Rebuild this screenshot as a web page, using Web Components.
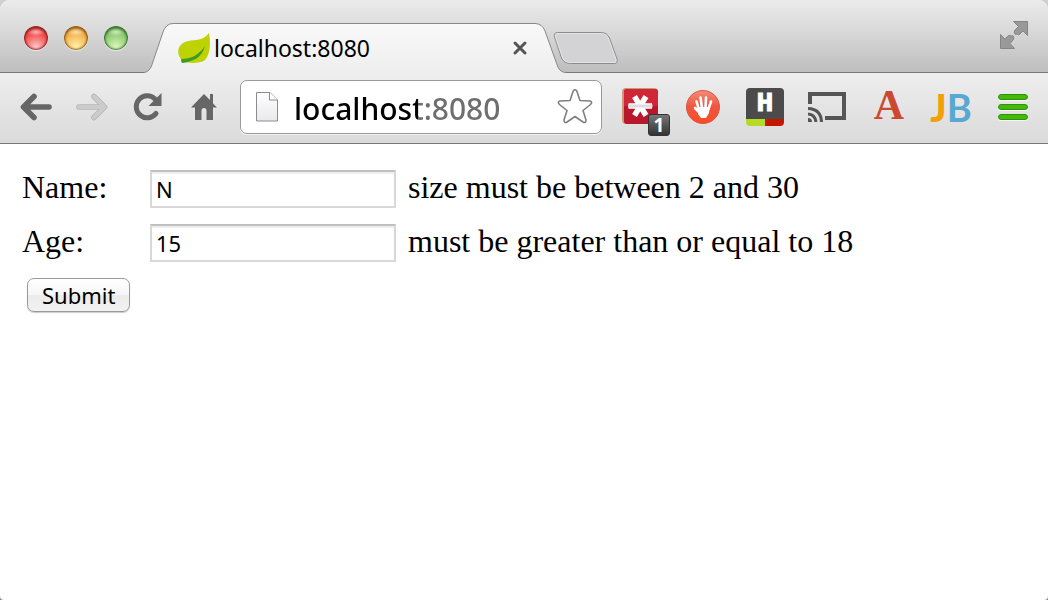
<!DOCTYPE html>
<html lang="en">
<head>
<meta charset="utf-8">
<meta name="viewport" content="width=device-width, initial-scale=1">
<title>localhost:8080</title>
<style>
  html { background: linear-gradient(#d0d0d0 50%, #888 50%); }
  body { margin: 0; font-family: "Noto Sans", sans-serif; color: #000; }
</style>
</head>
<body>
<browser-window>
  <tab-strip slot="strip">
    <browser-tab>localhost:8080</browser-tab>
  </tab-strip>
  <browser-toolbar slot="toolbar"></browser-toolbar>
  <person-form></person-form>
</browser-window>

<script>
function define(name, html, setup) {
  const template = document.createElement('template');
  template.innerHTML = html;
  customElements.define(name, class extends HTMLElement {
    constructor() {
      super();
      this.attachShadow({ mode: 'open' }).append(template.content.cloneNode(true));
    }
    connectedCallback() {
      if (setup) setup(this, this.shadowRoot);
    }
  });
}

define('browser-window', `
<style>
  :host { display: flex; flex-direction: column; min-height: 100vh; background: #fff; border-radius: 10px 10px 4px 4px; overflow: hidden; }
  main { flex: 1; }
</style>
<slot name="strip"></slot>
<slot name="toolbar"></slot>
<main><slot></slot></main>`);

define('traffic-lights', `
<style>
  :host { display: flex; gap: 16px; }
  button { width: 24px; height: 24px; padding: 0; border: 0; border-radius: 50%; box-shadow: 0 1px 1px #fff9, inset 0 0 2px 1px var(--rim), inset 0 2px 3px var(--rim); }
  .close { --rim: #8c2424; background: radial-gradient(ellipse 9px 4px at 12px 6px, #fff9, #fff0), radial-gradient(circle at 12px 21px, #ffc9c9, #f2504f 55%, #df3534); }
  .min { --rim: #8f5a1c; background: radial-gradient(ellipse 9px 4px at 12px 6px, #fff9, #fff0), radial-gradient(circle at 12px 21px, #fff3a8, #f3b04a 60%, #e69528); }
  .zoom { --rim: #397032; background: radial-gradient(ellipse 9px 4px at 12px 6px, #fff9, #fff0), radial-gradient(circle at 12px 21px, #dcf7bc, #89c86c 60%, #68b04e); }
</style>
<button class="close" aria-label="Close window"></button>
<button class="min" aria-label="Minimize window"></button>
<button class="zoom" aria-label="Zoom window"></button>`);

define('tab-strip', `
<style>
  :host { display: flex; align-items: flex-end; height: 73px; box-sizing: border-box; padding-left: 24px; background: linear-gradient(#777, #777) bottom / 100% 1px no-repeat, linear-gradient(#ebebeb, #dadada 40%, #bdbdbd); }
  traffic-lights { margin: 0 16px 23px 0; }
  ::slotted(browser-tab) { flex: 0 1 422px; min-width: 0; }
  button { padding: 0; border: 0; background: none; line-height: 0; }
  .new { margin: 0 auto 8px -13px; }
  .full { margin: 0 20px 24px 0; }
</style>
<traffic-lights></traffic-lights>
<slot></slot>
<button class="new" aria-label="New tab"><svg width="66" height="34" viewBox="0 0 66 34">
  <path d="M4.500 1.500H48Q54 1.500 56.500 7L64 28Q65 32.500 61.500 32.500H17.500Q11 32.500 8.500 27L1.500 6Q.5 1.500 4.500 1.500Z" fill="#d3d3d5" stroke="#8c8c8c"/>
  <path d="M5 2.500H48Q53 2.500 55.500 7.500L63 28Q64 31.500 61.500 31.500H17.500Q12 31.500 9.500 26.500L2.500 6Q1.500 2.500 5 2.500Z" fill="none" stroke="#fff" stroke-opacity=".4"/>
</svg></button>
<button class="full" aria-label="Enter full screen"><svg width="28" height="28" viewBox="0 0 28 28" fill="#999" stroke="#858585">
  <path d="M13.500.5H27.500V14.500L23 10 20 13Q18.500 14.500 17 13Q13.500 14.500 14.500 9.500L18.500 5.500Z"/>
  <path d="M.5 13.500 5 18 8 15Q9.500 13.500 11 15Q14.500 13.500 13.500 18.500L10 22.500 14.500 27.500H.5Z"/>
</svg></button>`);

define('browser-tab', `
<style>
  :host { display: flex; height: 50px; }
  svg { flex: none; display: block; }
  .body { flex: 1; min-width: 0; display: flex; align-items: center; background: linear-gradient(#f9f9f9, #eee); border-top: 1px solid #888; box-sizing: border-box; padding: 0 6px 2px 3px; }
  .title { flex: 1; min-width: 0; overflow: hidden; white-space: nowrap; font-size: 23px; line-height: 32px; padding-left: 3px; }
  button { padding: 0; border: 0; background: none; line-height: 0; }
</style>
<svg width="30" height="50" viewBox="0 0 30 50">
  <defs><linearGradient id="g" x2="0" y2="1"><stop stop-color="#f9f9f9"/><stop offset="1" stop-color="#eee"/></linearGradient></defs>
  <path d="M0 49.500Q5 49 7.500 43L19 9Q22 .5 29 .5H30V50H0Z" fill="url(#g)"/>
  <path d="M0 49.500Q5 49 7.500 43L19 9Q22 .5 29 .5H30" fill="none" stroke="#888"/>
</svg>
<div class="body">
  <svg width="34" height="32" viewBox="0 0 34 32">
    <path d="M32 1C34 11 33 23 28 28C23 32 11 31 7 30Q4 33 4 27C-1 21 1 13 8 10C16 7 26 10 32 1Z" fill="#bfd203"/>
    <path d="M4 27C14 27 22 23 28 14C25 26 15 30 5 31Z" fill="#3e9b25"/>
  </svg>
  <span class="title"><slot></slot></span>
  <button aria-label="Close tab"><svg width="16" height="16" viewBox="0 0 16 16"><path d="M3 3 13 13M13 3 3 13" stroke="#555" stroke-width="3" stroke-linecap="round"/></svg></button>
</div>
<svg width="32" height="50" viewBox="0 0 32 50">
  <defs><linearGradient id="h" x2="0" y2="1"><stop stop-color="#f9f9f9"/><stop offset="1" stop-color="#eee"/></linearGradient></defs>
  <path d="M0 .5H1Q8 .5 11 8L23.500 43Q26 49.500 32 49.500V50H0Z" fill="url(#h)"/>
  <path d="M0 .5H1Q8 .5 11 8L23.500 43Q26 49.500 32 49.500" fill="none" stroke="#888"/>
</svg>`);

define('omni-box', `
<style>
  :host { display: flex; align-items: center; height: 54px; box-sizing: border-box; padding: 0 8px 0 14px; background: #fff; border: 1px solid #999; border-radius: 7px; box-shadow: 0 1px 0 #fffa; }
  svg { flex: none; display: block; }
  input { flex: 1; min-width: 0; margin: 0 0 0 14px; padding: 2px 0 0; border: 0; outline: 0; box-sizing: border-box; font: 500 30px/42px "Noto Sans", sans-serif; height: 44px;
    color: transparent; background: linear-gradient(90deg, #000 124px, #6e6e6e 124px); -webkit-background-clip: text; background-clip: text; caret-color: #000; }
  button { padding: 0; border: 0; background: none; }
</style>
<svg width="25" height="32" viewBox="0 0 25 32">
  <defs><linearGradient id="p" x2="0" y2="1"><stop stop-color="#fff"/><stop offset="1" stop-color="#e9e9ec"/></linearGradient></defs>
  <path d="M1.500 1.500H15L22.500 9V30H1.500Z" fill="url(#p)" stroke="#8c8c8c"/>
  <path d="M14.500 1.500V9H22.500" fill="#fff" stroke="#8c8c8c"/>
</svg>
<input type="text" aria-label="Address" value="localhost:8080" spellcheck="false">
<button aria-label="Bookmark this page"><svg width="36" height="36" viewBox="0 0 36 36">
  <path d="M16.200 2Q18 -.5 19.800 2L23 11.500 33 12Q36 13 33.500 15.500L26 21.500 29 31Q29 34.500 26 33L18 27.500 10 33Q7 34.500 7 31L10 21.500 2.500 15.500Q0 13 3 12L13 11.500Z" fill="#fff" stroke="#808080" stroke-width="1.600" stroke-linejoin="round"/>
</svg></button>`);

define('tool-button', `
<style>
  :host { display: block; width: 56px; }
  :host([wide]) { width: 62px; }
  button { display: grid; place-items: center; width: 100%; height: 54px; padding: 0; border: 0; background: none; }
</style>
<button><slot></slot></button>`, (host, root) => {
  root.querySelector('button').setAttribute('aria-label', host.getAttribute('label'));
});

define('count-badge', `
<style>
  :host { position: absolute; left: 26px; top: 26px; width: 22px; height: 22px; box-sizing: border-box; border: 1px solid #333; border-radius: 3px; background: linear-gradient(#777, #333); color: #fff; font: bold 19px/20px "Noto Sans", sans-serif; text-align: center; }
</style>
<slot></slot>`);

define('browser-toolbar', `
<style>
  :host { display: flex; gap: 8px; padding: 7px 4px 9px 8px; background: linear-gradient(#eee, #dadada); border-bottom: 1px solid #777; }
  nav, .extensions { display: flex; flex: none; }
  omni-box { flex: 1; min-width: 0; }
  svg { display: block; }
  .badged { position: relative; width: 38px; height: 38px; }
  .h-logo { width: 38px; height: 38px; border-radius: 4px; overflow: hidden; background: linear-gradient(90deg, #b5dc22 19px, #c51700 19px) bottom / 100% 7px no-repeat, #4b4b4b; color: #fff; font: bold 28px/32px "Liberation Mono", monospace; -webkit-text-stroke: 1px #fff; }
  .a-logo { color: #cc4931; font: bold 42px/38px "Liberation Serif", serif; margin-bottom: 4px; }
  .jb-logo { color: #58a8d2; font: bold 38px/38px "Lato", sans-serif; }
  .jb-logo b { color: #f2a007; }
</style>
<nav aria-label="Navigation">
  <tool-button label="Back"><svg width="32" height="28" viewBox="0 0 32 28"><path d="M14 3.500 3.500 14 14 24.500M4 14H29" fill="none" stroke="#666" stroke-width="5.600" stroke-linecap="round" stroke-linejoin="round"/></svg></tool-button>
  <tool-button label="Forward"><svg width="32" height="28" viewBox="0 0 32 28"><path d="M18 3.500 28.500 14 18 24.500M28 14H3" fill="none" stroke="#b5b5b5" stroke-width="5.600" stroke-linecap="round" stroke-linejoin="round"/><path d="M18 3.500 28.500 14 18 24.500M28 14H3" fill="none" stroke="#cbcbcb" stroke-width="4" stroke-linecap="round" stroke-linejoin="round"/></svg></tool-button>
  <tool-button label="Reload"><svg width="30" height="28" viewBox="0 0 30 28"><path d="M23 20.500A11 11 0 1 1 22 6" fill="none" stroke="#666" stroke-width="5" stroke-linecap="round"/><path d="M28.500 0V13H15.500Z" fill="#666"/></svg></tool-button>
  <tool-button label="Home"><svg width="26" height="28" viewBox="0 0 26 28"><path d="M13 1 0 14.500H4V27H10.500V18Q10.500 15 13 15T15.500 18V27H22V14.500H26L22 10.500V1H19V7Z" fill="#666"/></svg></tool-button>
</nav>
<omni-box></omni-box>
<div class="extensions">
  <tool-button wide label="Password manager">
    <div class="badged"><svg width="36" height="37" viewBox="0 0 36 37">
      <rect width="36" height="36" rx="4" fill="#c99a77"/><rect x="2" y="1" width="34" height="35" rx="3" fill="#b9182c"/><path d="M2 18H36V5Q36 1 32 1H5Q2 1 2 4Z" fill="#cf2638"/>
      <path d="M6.500 18H30M12.500 8.500 24 27.500M24 8.500 12.500 27.500" stroke="#fff" stroke-width="5.500"/><path d="M6 18H30.500" stroke="#ddd" stroke-width="3"/>
    </svg><count-badge>1</count-badge></div>
  </tool-button>
  <tool-button wide label="Ad blocker"><svg width="34" height="34" viewBox="0 0 34 34">
    <defs><linearGradient id="r" x2="0" y2="1"><stop stop-color="#f58a78"/><stop offset=".5" stop-color="#ee5640"/><stop offset="1" stop-color="#ff4a24"/></linearGradient></defs>
    <circle cx="17" cy="17" r="16.500" fill="url(#r)" stroke="#d75a43"/>
    <path d="M13 20 10.500 11.500M16 18 14.500 7.500M19.500 18 20 7.500M22.500 19 25 11.500M15 24 9 18" stroke="#fff" stroke-width="2.600" stroke-linecap="round"/><path d="M12 17H23.500L23 23 20 28H15L12 24Z" fill="#fff"/>
  </svg></tool-button>
  <tool-button wide label="H extension"><div class="h-logo">H</div></tool-button>
  <tool-button wide label="Cast"><svg width="38" height="30" viewBox="0 0 38 30" fill="none" stroke="#555">
    <path d="M2 12V2H36V26H17" stroke-width="4"/><path d="M0 16.500Q13 17 13.500 30M0 22Q7 22.500 8 30" stroke-width="3"/><path d="M0 26Q4 26 4 30H0Z" fill="#555" stroke="none"/>
  </svg></tool-button>
  <tool-button wide label="Text extension"><div class="a-logo">A</div></tool-button>
  <tool-button wide label="JB extension"><div class="jb-logo"><b>J</b>B</div></tool-button>
  <tool-button wide label="Menu"><svg width="30" height="28" viewBox="0 0 30 28">
    <g fill="#fff" fill-opacity=".8"><rect y="1" width="30" height="7" rx="3"/><rect y="11" width="30" height="7" rx="3"/><rect y="21" width="30" height="7" rx="3"/></g>
    <g fill="#48b800" stroke="#249414"><rect x=".5" y="1.500" width="29" height="5" rx="2.500"/><rect x=".5" y="11.500" width="29" height="5" rx="2.500"/><rect x=".5" y="21.500" width="29" height="5" rx="2.500"/></g>
  </svg></tool-button>
</div>`);

define('form-row', `
<style>
  :host { display: grid; grid-template-columns: 116px 246px 1fr; column-gap: 12px; font: 32px/34px "Liberation Serif", serif; }
  input { width: 100%; height: 38px; box-sizing: border-box; margin: 0; padding: 0 4px; border: 2px solid #d8d8d8; border-top-color: #c0c0c0; border-radius: 0; outline: 0; background: #fff; box-shadow: inset 0 2px 1px #eee; font: 22px/30px "Noto Sans", sans-serif; color: #000; }
</style>
<label for="field"></label>
<input id="field" type="text" aria-describedby="error">
<span id="error"><slot></slot></span>`, (host, root) => {
  root.querySelector('label').textContent = host.getAttribute('label');
  const input = root.querySelector('input');
  input.name = host.getAttribute('name');
  input.value = host.getAttribute('value');
});

define('person-form', `
<style>
  :host { display: block; padding: 26px 22px; }
  form { display: grid; gap: 16px; }
  button { justify-self: start; margin-left: 5px; height: 34px; padding: 0 14px; border: 1px solid #999; border-radius: 7px; background: linear-gradient(#fff, #f6f6f6 50%, #ebebeb 50%, #f2f2f2); box-shadow: 0 1px 1px #0003; font: 22px/32px "Noto Sans", sans-serif; color: #000; }
</style>
<form onsubmit="return false">
  <form-row label="Name:" name="name" value="N">size must be between 2 and 30</form-row>
  <form-row label="Age:" name="age" value="15">must be greater than or equal to 18</form-row>
  <button type="submit">Submit</button>
</form>`);
</script>
</body>
</html>
